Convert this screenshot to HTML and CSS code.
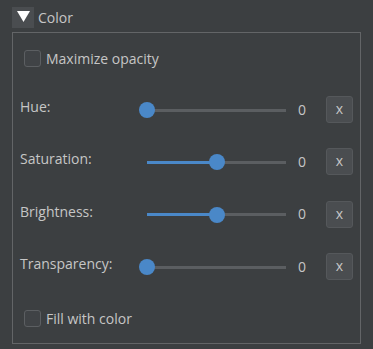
FILE: index.html
```html
<!DOCTYPE html>
<html>
<head>
<meta charset="utf-8">
<link rel="stylesheet" href="styles.css">
</head>
<body>
<div class="panel">
  <div class="header">
    <div class="toggle"><svg width="13" height="11" viewBox="0 0 13 11"><polygon points="0,0 13,0 6.5,11" fill="#ffffff"/></svg></div>
    <span class="title">Color</span>
  </div>
  <div class="group">
    <label class="check-row first"><span class="box"></span><span>Maximize opacity</span></label>

    <span class="label">Hue:</span>
    <div class="slider"><div class="track"><div class="fill" style="width:0%"></div></div><div class="handle" style="left:0%"></div></div>
    <span class="value">0</span>
    <button class="reset">x</button>

    <span class="label">Saturation:</span>
    <div class="slider"><div class="track"><div class="fill" style="width:50%"></div></div><div class="handle" style="left:50%"></div></div>
    <span class="value">0</span>
    <button class="reset">x</button>

    <span class="label">Brightness:</span>
    <div class="slider"><div class="track"><div class="fill" style="width:50%"></div></div><div class="handle" style="left:50%"></div></div>
    <span class="value">0</span>
    <button class="reset">x</button>

    <span class="label">Transparency:</span>
    <div class="slider"><div class="track"><div class="fill" style="width:0%"></div></div><div class="handle" style="left:0%"></div></div>
    <span class="value">0</span>
    <button class="reset">x</button>

    <label class="check-row"><span class="box"></span><span>Fill with color</span></label>
  </div>
</div>
</body>
</html>
```

FILE: styles.css
```css
html, body {
  margin: 0;
  padding: 0;
  background: #3c3f41;
}
body {
  font-family: "Open Sans", "DejaVu Sans", sans-serif;
  font-size: 14px;
  color: #c6c6c6;
  width: 373px;
  height: 349px;
  overflow: hidden;
}
.panel {
  padding: 7px 0 0 12px;
}
.header {
  display: flex;
  align-items: center;
  height: 21px;
  gap: 4px;
}
.toggle {
  width: 22px;
  height: 21px;
  background: #4a4d50;
  display: flex;
  justify-content: center;
  padding-top: 4px;
  box-sizing: border-box;
}
.toggle svg { display: block; }
.title {
  line-height: 21px;
  margin-top: -1px;
}
.group {
  margin-top: 4px;
  width: 349px;
  height: 312px;
  box-sizing: border-box;
  border: 1px solid #636567;
  padding-left: 7px;
  display: grid;
  grid-template-columns: 127px 139px 40px 27px;
  grid-template-rows: 51px 52px 52px 53px 52px 50px;
  align-items: center;
}
.check-row {
  grid-column: 1 / -1;
  display: flex;
  align-items: center;
  gap: 5px;
  padding-left: 4px;
}
.box {
  width: 17px;
  height: 17px;
  box-sizing: border-box;
  border: 1px solid #5c5f62;
  border-radius: 3px;
  background: #404346;
}
.label {
  margin-bottom: 7px;
}
.slider {
  position: relative;
  height: 16px;
  display: flex;
  align-items: center;
}
.track {
  width: 100%;
  height: 3px;
  background: #5b5e61;
  display: flex;
}
.fill {
  height: 100%;
  background: #4a88c8;
}
.handle {
  position: absolute;
  top: 0;
  width: 16px;
  height: 16px;
  margin-left: -8px;
  border-radius: 50%;
  background: #4a88c8;
}
.value {
  padding-left: 12px;
  margin-bottom: 2px;
}
.reset {
  width: 27px;
  height: 27px;
  box-sizing: border-box;
  border: 1px solid #55585b;
  border-radius: 3px;
  background: #4a4d50;
  color: #c6c6c6;
  font-family: "Open Sans", "DejaVu Sans", sans-serif;
  font-size: 14px;
  padding: 0 0 2px 0;
  margin-bottom: 1px;
}
```
